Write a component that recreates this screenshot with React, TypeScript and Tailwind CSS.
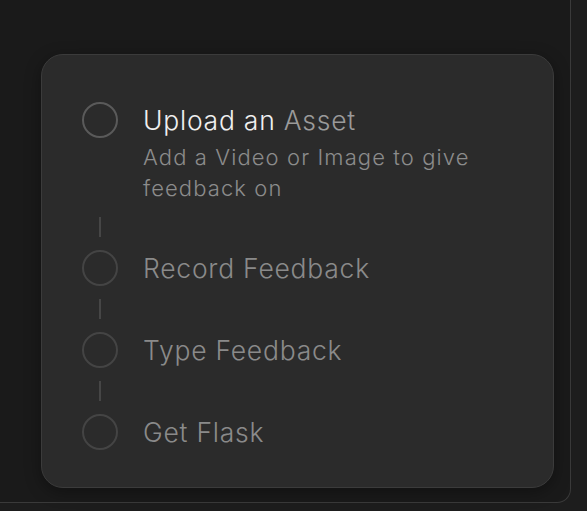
import React from 'react'

const steps = [
  { title: 'Record Feedback' },
  { title: 'Type Feedback' },
  { title: 'Get Flask' },
]

function Circle({ active = false }: { active?: boolean }) {
  return (
    <div
      className={
        active
          ? 'h-9 w-9 shrink-0 rounded-full border-2 border-[#5a5a5a]'
          : 'h-9 w-9 shrink-0 rounded-full border-2 border-[#444444]'
      }
    />
  )
}

function Connector() {
  return (
    <div className="flex w-9 justify-center py-[13px]">
      <div className="h-5 w-[1.5px] bg-[#464646]" />
    </div>
  )
}

export default function App() {
  return (
    <div
      className="h-[511px] w-[587px] overflow-hidden bg-[#1d1d1d]"
      style={{ fontFamily: 'Inter, "Noto Sans", sans-serif' }}
    >
      <div className="h-[503px] w-[571px] rounded-br-[14px] border-b border-r border-[#3a3a3a] bg-[#1a1a1a] pl-[41px] pt-[54px]">
        <div className="flex h-[434px] w-[513px] flex-col rounded-[22px] border border-[#3b3b3b] bg-[#2b2b2b] pl-[40px] pt-[47px] shadow-[0_4px_16px_rgba(0,0,0,0.35)]">
          <div className="flex gap-[25px]">
            <Circle active />
            <div>
              <div className="text-[26.5px] font-[350] leading-[36px] tracking-[0.75px]">
                <span className="text-[#f0f0f0]">Upload an </span>
                <span className="text-[#9a9a9a]">Asset</span>
              </div>
              <p className="mt-[4px] w-[350px] text-[22px] font-[350] leading-[31px] tracking-[1.1px] text-[#8c8c8c]">
                Add a Video or Image to give feedback on
              </p>
            </div>
          </div>
          {steps.map((s) => (
            <div key={s.title}>
              <Connector />
              <div className="flex items-center gap-[25px]">
                <Circle />
                <span className="text-[26.5px] font-[350] leading-[36px] tracking-[0.75px] text-[#8a8a8a]">{s.title}</span>
              </div>
            </div>
          ))}
        </div>
      </div>
    </div>
  )
}
